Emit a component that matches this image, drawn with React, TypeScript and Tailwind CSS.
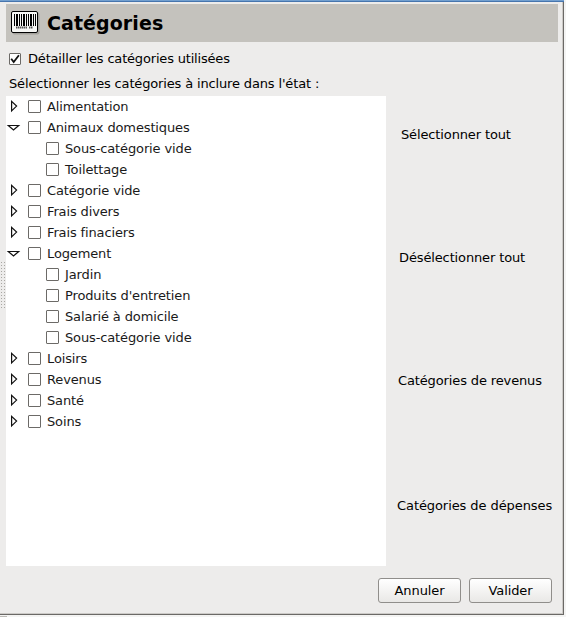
type Row = { label: string; kind: "closed" | "open" | "child" };

const rows: Row[] = [
  { label: "Alimentation", kind: "closed" },
  { label: "Animaux domestiques", kind: "open" },
  { label: "Sous-catégorie vide", kind: "child" },
  { label: "Toilettage", kind: "child" },
  { label: "Catégorie vide", kind: "closed" },
  { label: "Frais divers", kind: "closed" },
  { label: "Frais finaciers", kind: "closed" },
  { label: "Logement", kind: "open" },
  { label: "Jardin", kind: "child" },
  { label: "Produits d'entretien", kind: "child" },
  { label: "Salarié à domicile", kind: "child" },
  { label: "Sous-catégorie vide", kind: "child" },
  { label: "Loisirs", kind: "closed" },
  { label: "Revenus", kind: "closed" },
  { label: "Santé", kind: "closed" },
  { label: "Soins", kind: "closed" },
];

function Expander({ open }: { open: boolean }) {
  return (
    <svg width="15" height="15" viewBox="0 0 15 15" className="shrink-0" fill="#fff" stroke="#111" strokeWidth="1.2">
      {open ? <path d="M2.3 5.5h10.4L7.5 10z" /> : <path d="M5.6 2.3v9.6l5-4.8z" />}
    </svg>
  );
}

function TreeRow({ row }: { row: Row }) {
  return (
    <div className="flex h-[21px] items-center">
      {row.kind === "child" ? <span className="w-10" /> : <><Expander open={row.kind === "open"} /><span className="w-[7px]" /></>}
      <span className="size-[13px] shrink-0 rounded-[1px] border border-[#6c6a67] bg-white" />
      <span className="ml-[6px] whitespace-nowrap text-[#1a1a1a]">{row.label}</span>
    </div>
  );
}

function Barcode() {
  const bars = [[3, 1], [5, 2], [8, 1], [10, 1], [12, 2], [15, 1], [17, 1], [19, 2], [22, 1], [24, 1]];
  return (
    <svg width="29" height="24" viewBox="0 0 29 24" className="shrink-0">
      <rect x="1.5" y="1.5" width="27" height="22" rx="2" fill="#a3a19c" />
      <rect x="0.5" y="0.5" width="26" height="21" rx="1.5" fill="#f6f6f4" stroke="#000" />
      {bars.map(([x, w]) => (
        <rect key={x} x={x} y="3" width={w} height="12" fill="#000" />
      ))}
      <path d="M5 16.5h11M18 16.5h4" stroke="#555" strokeWidth="2" strokeDasharray="1.5 .5" />
    </svg>
  );
}

function Button({ children }: { children: string }) {
  return (
    <button className="h-[25px] w-[83px] rounded-[3px] border border-[#908e8b] bg-linear-to-b from-white to-[#e9e8e6] tracking-[-0.1px] text-black">
      {children}
    </button>
  );
}

export default function App() {
  return (
    <div className="h-[617px] w-[566px] overflow-hidden bg-[#f4f4f3] font-['DejaVu_Sans',sans-serif] text-[13px] leading-[21px] tracking-[-0.13px] text-black">
      <div className="h-px w-[564px] bg-[#729fcf]" />
      <div className="h-px w-[564px] bg-[#4775ad]" />
      <div className="flex h-[613px] w-[564px] border-r border-b border-[#6b6966]">
        <div className="flex w-[563px] border-r border-b border-[#cccac7] bg-[#edeceb]">
          <div className="w-[6px] pt-[260px] pl-px">
            <div className="grid grid-cols-[1px_1px] gap-[2px]">
              {Array.from({ length: 32 }, (_, i) => (
                <span key={i} className="size-px bg-[#a9a7a3]" />
              ))}
            </div>
          </div>
          <div className="w-[552px] pt-[2px]">
            <header className="flex h-[38px] items-center bg-[#c4c2bd] pl-[5px]">
              <Barcode />
              <h1 className="ml-[7px] text-[19px] font-bold tracking-[0.08px]">Catégories</h1>
            </header>
            <div className="mt-[6px] flex h-[21px] items-center pl-[3px]">
              <span className="flex size-[12px] items-center justify-center rounded-[1px] border border-[#6c6a67] bg-white">
                <svg width="10" height="10" viewBox="0 0 10 10" className="shrink-0" fill="none" stroke="#111" strokeWidth="1.8"><path d="M1.2 4.8l2.5 3.2L8.9 1.3" /></svg>
              </span>
              <span className="ml-[7px] tracking-[-0.18px]">Détailler les catégories utilisées</span>
            </div>
            <p className="mt-[4px] h-[23px] pl-[3px] tracking-[-0.15px]">Sélectionner les catégories à inclure dans l'état :</p>
            <div className="flex">
              <div className="h-[470px] w-[380px] bg-white">
                {rows.map((r, i) => <TreeRow key={i} row={r} />)}
              </div>
              <div className="flex w-[166px] flex-col whitespace-nowrap pt-[28px]">
                <span className="h-[123px] pl-[15px]">Sélectionner tout</span>
                <span className="h-[123px] pl-[13px]">Désélectionner tout</span>
                <span className="h-[125px] pl-[12px]">Catégories de revenus</span>
                <span className="pl-[11px] tracking-[-0.08px]">Catégories de dépenses</span>
              </div>
            </div>
            <div className="mt-[12px] flex justify-end gap-[8px] pr-[6px]">
              <Button>Annuler</Button>
              <Button>Valider</Button>
            </div>
          </div>
        </div>
      </div>
      <div className="mt-px h-px w-[7px] bg-[#bcbab6]" />
    </div>
  );
}
